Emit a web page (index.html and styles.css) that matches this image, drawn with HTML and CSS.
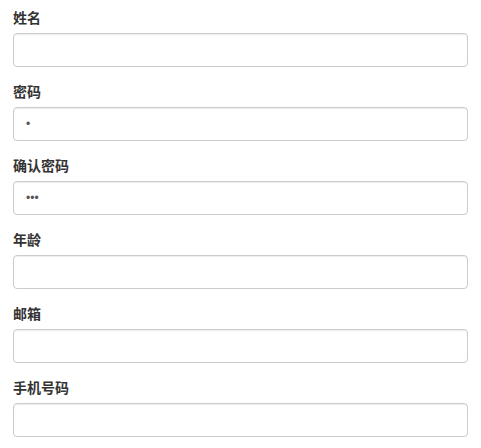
FILE: index.html
```html
<!DOCTYPE html>
<html lang="zh">
<head>
<meta charset="utf-8">
<link rel="stylesheet" href="styles.css">
</head>
<body>
<form class="form">
  <div class="form-group">
    <label class="label">姓名</label>
    <input class="form-control" type="text">
  </div>
  <div class="form-group">
    <label class="label">密码</label>
    <input class="form-control pwd" type="password" value="a">
  </div>
  <div class="form-group">
    <label class="label">确认密码</label>
    <input class="form-control pwd" type="password" value="abc">
  </div>
  <div class="form-group">
    <label class="label">年龄</label>
    <input class="form-control" type="text">
  </div>
  <div class="form-group">
    <label class="label">邮箱</label>
    <input class="form-control" type="text">
  </div>
  <div class="form-group">
    <label class="label">手机号码</label>
    <input class="form-control" type="text">
  </div>
</form>
</body>
</html>
```
FILE: styles.css
```css
* { box-sizing: border-box; }
html, body { background: #fff; }
body {
  margin: 8px;
  font-family: "Liberation Sans", "Noto Sans CJK SC", sans-serif;
  font-size: 14px;
  line-height: 20px;
  color: #333;
}
.form { padding: 0 5px; }
.form-group {
  display: flex;
  flex-direction: column;
  margin-bottom: 15px;
}
.label {
  font-weight: bold;
  margin-bottom: 5px;
  line-height: 20px;
}
.form-control {
  display: block;
  width: 100%;
  height: 34px;
  padding: 6px 12px;
  font-family: "Liberation Sans", sans-serif;
  font-size: 14px;
  color: #555;
  background: #fff;
  border: 1px solid #ccc;
  border-radius: 4px;
  box-shadow: inset 0 1px 1px rgba(0,0,0,.075);
  outline: none;
}
.pwd {
  font-size: 12px;
  color: #555;
}
```
